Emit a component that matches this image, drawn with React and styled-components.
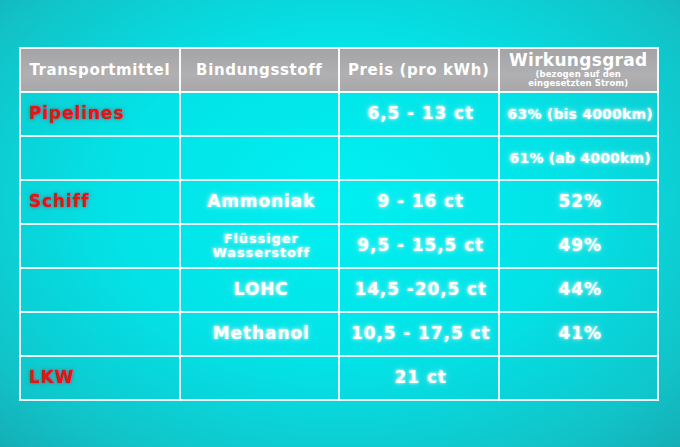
import styled, { createGlobalStyle } from "styled-components";

const GlobalStyle = createGlobalStyle`
  html, body {
    margin: 0;
    padding: 0;
  }
  body {
    font-family: "DejaVu Sans", "Liberation Sans", sans-serif;
  }
`;

const Page = styled.div`
  width: 680px;
  height: 447px;
  box-sizing: border-box;
  padding: 47px 0 0 19px;
  background: radial-gradient(
    ellipse 75% 80% at 50% 45%,
    #00f2f2 0%,
    #04e2e6 45%,
    #11c3c8 80%,
    #15a9b0 100%
  );
  overflow: hidden;
`;

const Table = styled.table`
  border-collapse: collapse;
  table-layout: fixed;
  width: 640px;
  border: 2px solid rgba(255, 255, 255, 0.92);
`;

const HeadCell = styled.th`
  height: 42px;
  padding: 0 2px;
  border: 2px solid rgba(255, 255, 255, 0.92);
  background: linear-gradient(180deg, #a4a4a6 0%, #b0b0b2 60%, #a8a8aa 100%);
  color: #fff;
  font-weight: 700;
  font-size: 15px;
  letter-spacing: 0.6px;
  text-align: center;
  vertical-align: middle;
  line-height: 1;
  white-space: nowrap;
`;

const Small = styled.div`
  font-size: 8.5px;
  letter-spacing: 0.1px;
  line-height: 1.05;
  margin-top: 1px;
`;

const Big = styled.div`
  font-size: 17px;
  letter-spacing: 0.3px;
`;

const Cell = styled.td`
  height: 42px;
  padding: 0 4px 0 8px;
  border: 2px solid rgba(255, 255, 255, 0.92);
  background: rgba(0, 230, 235, 0.12);
  color: ${(p) => (p.$red ? "#ec1017" : "#fff")};
  font-weight: 700;
  font-size: ${(p) => p.$size || 17}px;
  letter-spacing: ${(p) => p.$spacing ?? 0.9}px;
  line-height: ${(p) => (p.$size && p.$size < 14 ? 1.1 : 1.05)};
  text-align: ${(p) => (p.$red ? "left" : "center")};
  vertical-align: middle;
  white-space: nowrap;
  text-shadow: ${(p) =>
    p.$red
      ? "0 0 2px rgba(150, 0, 0, 0.5), 0 0 5px rgba(230, 0, 0, 0.35)"
      : "0 0 3px rgba(255, 255, 255, 0.8), 0 0 7px rgba(255, 255, 255, 0.5)"};
`;

const rows = [
  { mittel: "Pipelines", stoff: "", preis: "6,5 - 13 ct", grad: "63% (bis 4000km)", small: true },
  { mittel: "", stoff: "", preis: "", grad: "61% (ab 4000km)", small: true },
  { mittel: "Schiff", stoff: "Ammoniak", preis: "9 - 16 ct", grad: "52%" },
  { mittel: "", stoff: ["Flüssiger", "Wasserstoff"], preis: "9,5 - 15,5 ct", grad: "49%" },
  { mittel: "", stoff: "LOHC", preis: "14,5 -20,5 ct", grad: "44%" },
  { mittel: "", stoff: "Methanol", preis: "10,5 - 17,5 ct", grad: "41%" },
  { mittel: "LKW", stoff: "", preis: "21 ct", grad: "" },
];

export default function App() {
  return (
    <Page>
      <GlobalStyle />
      <Table>
        <thead>
          <tr>
            <HeadCell>Transportmittel</HeadCell>
            <HeadCell>Bindungsstoff</HeadCell>
            <HeadCell>Preis (pro kWh)</HeadCell>
            <HeadCell>
              <Big>Wirkungsgrad</Big>
              <Small>
                (bezogen auf den
                <br />
                eingesetzten Strom)
              </Small>
            </HeadCell>
          </tr>
        </thead>
        <tbody>
          {rows.map((r, i) => (
            <tr key={i}>
              <Cell $red>{r.mittel}</Cell>
              {Array.isArray(r.stoff) ? (
                <Cell $size={13} $spacing={0.9}>
                  {r.stoff[0]}
                  <br />
                  {r.stoff[1]}
                </Cell>
              ) : (
                <Cell>{r.stoff}</Cell>
              )}
              <Cell>{r.preis}</Cell>
              {r.small ? (
                <Cell $size={14} $spacing={0.2}>
                  {r.grad}
                </Cell>
              ) : (
                <Cell>{r.grad}</Cell>
              )}
            </tr>
          ))}
        </tbody>
      </Table>
    </Page>
  );
}
